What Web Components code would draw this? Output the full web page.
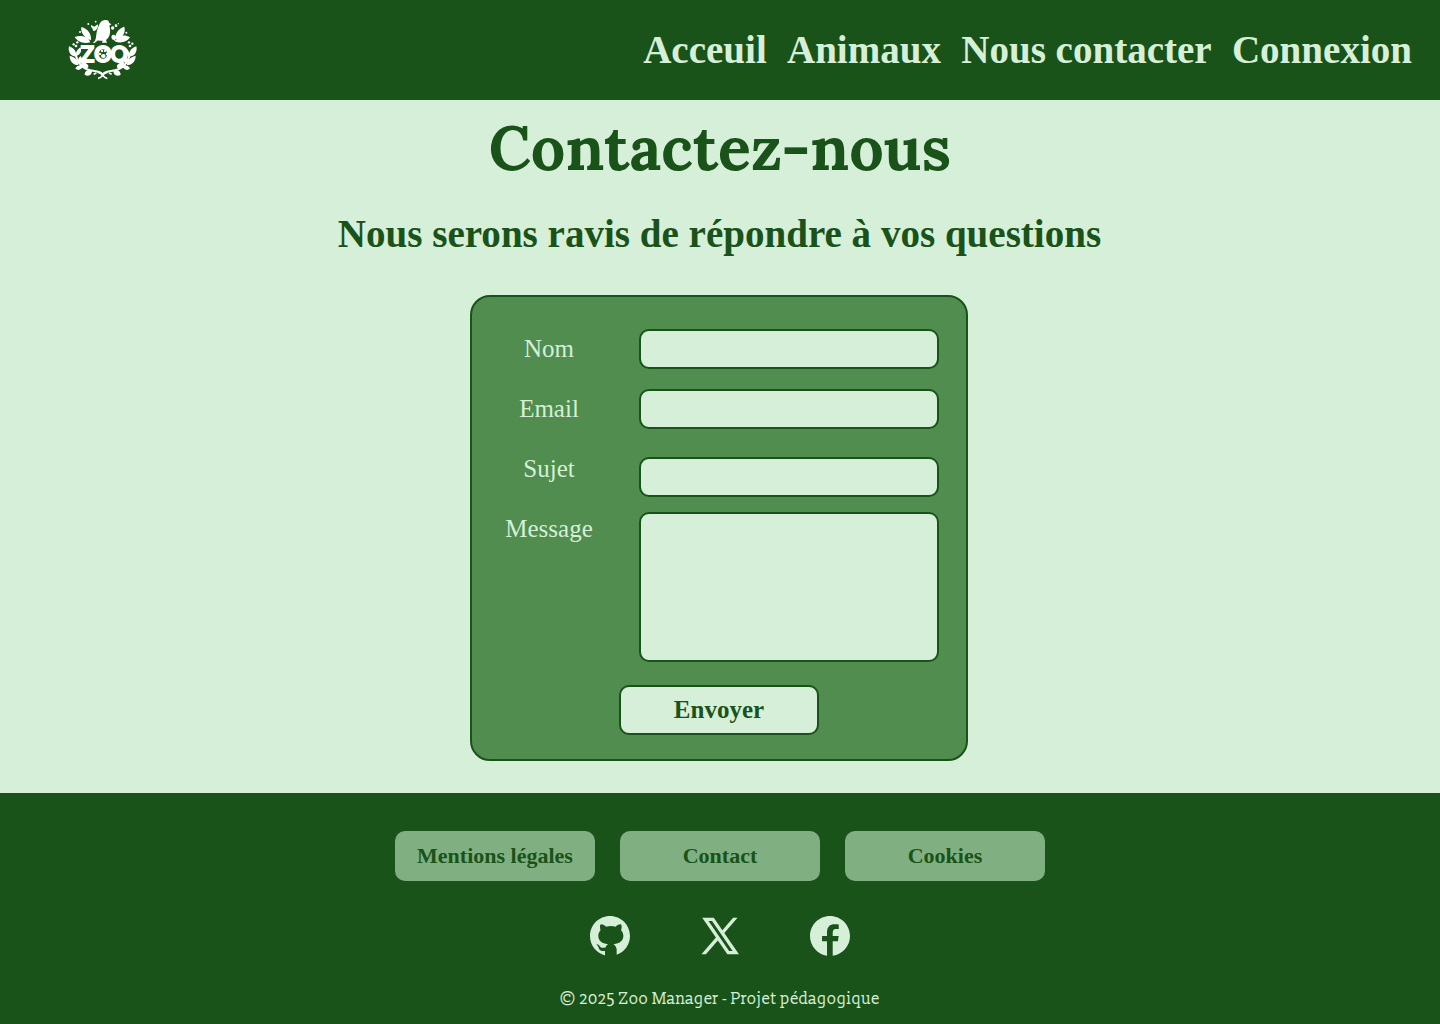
<!DOCTYPE html>
<html lang="fr">
<head>
<meta charset="utf-8">
<title>Zoo Manager - Contact</title>
<style>
:root{--dark:#1a5319;--light:#d6efd8;--mid:#508d4e;--soft:#80af81}
body{margin:0;font-family:"Liberation Serif",serif;background:var(--light);color:var(--dark)}
</style>
</head>
<body>
<zoo-page></zoo-page>
<script>
const define=(name,html)=>customElements.define(name,class extends HTMLElement{
  constructor(){super();this.attachShadow({mode:"open"}).innerHTML=html;}
});

define("zoo-logo",`<style>:host{display:block;width:86px;height:76px}svg{display:block}</style>
<svg width="86" height="76" viewBox="0 0 258 228" fill="#fff" aria-label="Zoo">
<path d="M98 92C112 86 106 66 113 50C118 38 120 26 134 24C143 23 148 27 147 32L154 37L148 41C154 60 148 77 138 84L141 92H126L128 86C119 88 117 84 112 86L104 93Z"/>
<path d="M91 91C69 97 52 88 44 75C65 68 84 74 91 91ZM93 85C73 77 61 62 64 45C84 50 95 66 93 85ZM93 39L103 44L113 37C116 44 112 50 107 55C100 60 98 54 98 50C94 47 92 43 93 39Z"/>
<path d="M164 88C174 70 193 65 210 76C201 90 183 96 164 88ZM166 80C165 64 177 48 193 44C198 61 187 78 172 82ZM154 76C156 66 163 67 168 74L165 88C160 80 157 87 154 76Z"/>
<g><circle cx="85" cy="36" r="3"/><circle cx="107" cy="29" r="2.5"/><circle cx="158" cy="48" r="5"/><circle cx="168" cy="41" r="4"/><circle cx="175" cy="35" r="2"/><circle cx="60" cy="60" r="3"/><circle cx="199" cy="62" r="3"/><circle cx="52" cy="91" r="3.5"/><circle cx="207" cy="91" r="3.5"/><circle cx="41" cy="97" r="3.5"/><circle cx="217" cy="95" r="3.5"/><circle cx="48" cy="102" r="4"/><circle cx="210" cy="102" r="4"/></g>
<text transform="translate(0 152) scale(.88 1)" x="67 114.500 170" y="0" font-family="Montserrat,Inter,sans-serif" font-weight="800" font-size="76">ZOO</text>
<g><ellipse cx="130" cy="132" rx="7" ry="6"/><circle cx="120" cy="126" r="3.5"/><circle cx="126" cy="117" r="3.5"/><circle cx="135" cy="117" r="3.5"/><circle cx="141" cy="126" r="3.5"/></g>
<g id="side"><path d="M49 134C32 134 23 119 27 103C43 109 50 119 49 134ZM48 133C46 121 52 113 61 106C67 118 61 128 48 133ZM55 159C39 159 29 147 29 131C47 136 55 145 55 159ZM56 157C52 145 54 138 62 132C70 143 65 151 56 157ZM70 163C64 173 54 178 46 169C52 161 60 157 70 163ZM69 166C59 153 65 146 73 151C84 156 90 164 80 171ZM96 174C97 190 84 195 74 188C75 177 81 173 96 174Z"/><path d="M46 125C52 150 68 170 91 175C107 178 120 177 127 186" fill="none" stroke="#fff" stroke-width="6"/></g>
<use href="#side" transform="translate(256 0) scale(-1 1)"/>
<path d="M113 181C128 179 128 200 142 199M143 181C128 179 128 200 114 199M101 187L109 183M155 187L147 183" fill="none" stroke="#fff" stroke-width="5"/>
</svg>`);

define("nav-link",`<style>:host{display:block}a{color:var(--light);text-decoration:none;font-weight:700;font-size:39.06px}</style><a href="#"><slot></slot></a>`);

define("zoo-header",`<style>:host{display:flex;justify-content:space-between;align-items:center;height:100px;box-sizing:border-box;padding:0 28px 0 60px;background:var(--dark)}nav{display:flex;gap:20.2px;padding-bottom:2px}</style>
<zoo-logo></zoo-logo>
<nav><nav-link>Acceuil</nav-link><nav-link>Animaux</nav-link><nav-link>Nous contacter</nav-link><nav-link>Connexion</nav-link></nav>`);

define("contact-form",`<style>
:host{display:block}
form{box-sizing:border-box;width:498px;height:466px;border:2px solid var(--dark);border-radius:20px;background:var(--mid);padding:22px 27px 0 17px;display:flex;flex-direction:column;align-items:center}
.grid{display:flex;justify-content:space-between;align-self:stretch}
.labels{display:flex;flex-direction:column;width:120px}
label{height:60px;line-height:60px;text-align:center;font-size:25px;color:var(--light)}
.fields{display:flex;flex-direction:column;width:300px;padding-top:10px}
input,textarea,button{box-sizing:border-box;border:2px solid var(--dark);border-radius:10px;background:var(--light);margin:0;outline:0;color:var(--dark);font-family:inherit}
input{height:40px;margin-bottom:20px;font-size:20px}
#s{margin:8px 0 15px}
textarea{height:150px;resize:none;font-size:20px}
button{width:200px;height:50px;font-size:25px;font-weight:700;margin:23px 0 0 10px;padding:0}
</style>
<form><div class="grid"><div class="labels"><label for="n">Nom</label><label for="e">Email</label><label for="s">Sujet</label><label for="m">Message</label></div>
<div class="fields"><input id="n"><input id="e"><input id="s"><textarea id="m"></textarea></div></div>
<button type="button">Envoyer</button></form>`);

define("contact-main",`<style>
:host{display:flex;flex-direction:column;align-items:center;height:693px}
h1,h2{margin:0;text-align:center;white-space:nowrap}
h1{font-family:Lora,"Liberation Serif",serif;font-size:61.04px;line-height:78px;margin-top:9px}
h2{font-size:39.06px;line-height:44px;margin-top:25px;padding-right:1px}
contact-form{margin:39px 2px 0 0}
</style>
<h1>Contactez-nous</h1><h2>Nous serons ravis de répondre à vos questions</h2><contact-form></contact-form>`);

define("footer-button",`<style>:host{display:block}a{display:flex;align-items:center;justify-content:center;width:200px;height:50px;border-radius:10px;background:var(--soft);color:var(--dark);font-size:22px;font-weight:700;text-decoration:none}</style><a href="#"><slot></slot></a>`);

define("social-links",`<style>:host{display:flex;gap:70px}svg{display:block;width:40px;height:40px;fill:var(--light)}</style>
<svg viewBox="3 3 24 24"><path d="M15,3C8.373,3,3,8.373,3,15c0,5.623,3.872,10.328,9.092,11.63C12.036,26.468,12,26.28,12,26.047v-2.051c-0.487,0-1.303,0-1.508,0c-0.821,0-1.551-0.353-1.905-1.009c-0.393-0.729-0.461-1.844-1.435-2.526c-0.289-0.227-0.069-0.486,0.264-0.451c0.615,0.174,1.125,0.596,1.605,1.222c0.478,0.627,0.703,0.769,1.596,0.769c0.433,0,1.081-0.025,1.691-0.121c0.328-0.833,0.895-1.6,1.588-1.962c-3.996-0.411-5.903-2.399-5.903-5.098c0-1.162,0.495-2.286,1.336-3.233C9.053,10.647,8.706,8.73,9.435,8c1.798,0,2.885,1.166,3.146,1.481C13.477,9.174,14.461,9,15.495,9c1.036,0,2.024,0.174,2.922,0.483C18.675,9.17,19.763,8,21.565,8c0.732,0.731,0.381,2.656,0.102,3.594c0.836,0.945,1.328,2.066,1.328,3.226c0,2.697-1.904,4.684-5.894,5.097C18.199,20.49,19,22.1,19,23.313v2.734c0,0.104-0.023,0.179-0.035,0.268C23.641,24.676,27,20.236,27,15C27,8.373,21.627,3,15,3z"/></svg>
<svg viewBox="3 3 24 24"><path d="M26.37,26l-8.795-12.822l0.015,0.012L25.52,4h-2.65l-6.46,7.48L11.28,4H4.33l8.211,11.971L12.54,15.97L3.88,26h2.65l7.182-8.322L19.42,26H26.37z M10.23,6l12.34,18h-2.1L8.12,6H10.23z"/></svg>
<svg viewBox="3 3 24 24"><path d="M15,3C8.373,3,3,8.373,3,15c0,6.016,4.432,10.984,10.206,11.852V18.18h-2.969v-3.154h2.969v-2.099c0-3.475,1.693-5,4.581-5c1.383,0,2.115,0.103,2.461,0.149v2.753h-1.97c-1.226,0-1.654,1.163-1.654,2.473v1.724h3.593L19.73,18.18h-3.106v8.697C22.481,26.083,27,21.075,27,15C27,8.373,21.627,3,15,3z"/></svg>`);

define("zoo-footer",`<style>
:host{display:flex;flex-direction:column;align-items:center;height:231px;box-sizing:border-box;padding-top:38px;background:var(--dark)}
.links{display:flex;gap:25px}
social-links{margin-top:35px}
p{margin:31px 0 0;font:16px/24px "Slabo 13px","DejaVu Serif Condensed",serif;color:var(--light);white-space:nowrap}
</style>
<div class="links"><footer-button>Mentions légales</footer-button><footer-button>Contact</footer-button><footer-button>Cookies</footer-button></div>
<social-links></social-links><p>© 2025 Zoo Manager - Projet pédagogique</p>`);

define("zoo-page",`<style>:host{display:block;height:1024px;overflow:hidden}</style><zoo-header></zoo-header><contact-main></contact-main><zoo-footer></zoo-footer>`);
</script>
</body>
</html>
